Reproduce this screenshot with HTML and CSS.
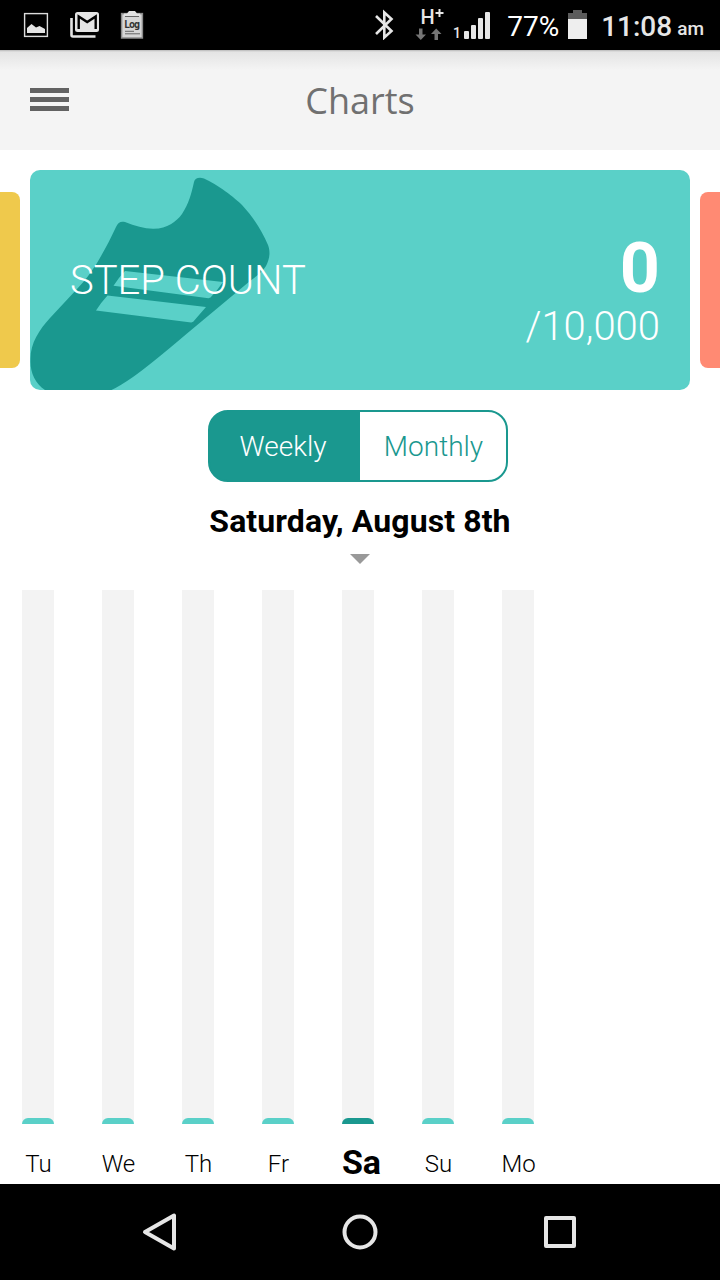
FILE: index.html
```
<!DOCTYPE html>
<html lang="en">
<head>
  <meta charset="utf-8">
  <title>Charts</title>
  <link rel="stylesheet" href="styles.css">
</head>
<body>
  <div class="status-bar">
    <svg class="notifications" width="124" height="30" viewBox="0 0 124 30">
      <!-- picture -->
      <rect x="4.6" y="3.6" width="22.8" height="22.8" fill="none" stroke="#dcdcdc" stroke-width="1.4"/>
      <path d="M7 23v-5l4.500-4 4.500 3.500 3.500-1.500 5.500 3v4H7z" fill="#e4e4e4"/>
      <!-- mail -->
      <path d="M51.5 8v17q0 1.500 1.500 1.500h22.500" fill="none" stroke="#e4e4e4" stroke-width="2.6"/>
      <rect x="55" y="2" width="24" height="20" rx="2.5" fill="#e4e4e4"/>
      <path d="M58.7 19V6.5l8.5 5.500 8.500-5.500V19" fill="none" stroke="#000" stroke-width="2.4"/>
      <!-- log -->
      <rect x="101.6" y="3.6" width="20.8" height="24.4" fill="#d6d6d6" stroke="#8c8c8c" stroke-width="1.5"/>
      <path d="M104 6V3.500h3l2-2.500h6l2 2.500h3V6z" fill="#e2e2e2"/>
      <path d="M105 6.500h14M105 21.300h9M105 23.800h15" stroke="#666" stroke-width="1"/>
      <text x="104" y="17.500" class="log-text" textLength="16">Log</text>
    </svg>
    <div class="system">
      <svg width="120" height="40" viewBox="0 0 120 40">
        <!-- bluetooth -->
        <path d="M6 16l15.500 15L14.300 37.500V12.500L21.500 19 6 34" class="bluetooth"/>
        <text x="50.500" y="24" class="network">H</text>
        <path d="M69.500 9v8M65.500 13h8" stroke="#e6e6e6" stroke-width="2"/>
        <path d="M49 28.500v6h-3.500l5.300 5.500L56 34.500h-3.500v-6zM64.500 40v-6H61l5.200-5.500L71.500 34H68v6z" fill="#757575"/>
        <text x="83" y="38" class="sim">1</text>
        <g fill="#e6e6e6">
          <rect x="94" y="31" width="5" height="8" rx="1"/>
          <rect x="101" y="25" width="5" height="14" rx="1"/>
          <rect x="108" y="18" width="5" height="21" rx="1"/>
          <rect x="115" y="12" width="5" height="27" rx="1"/>
        </g>
      </svg>
      <span class="percent">77%</span>
      <svg class="battery" width="19" height="29" viewBox="0 0 19 29">
        <path d="M0 3h5V0h9v3h5v6H0z" fill="#5c5c5c"/>
        <path d="M0 9h19v20H0z" fill="#eee"/>
      </svg>
      <span class="time">11:08</span>
      <span class="ampm">am</span>
    </div>
  </div>

  <header>
    <div class="menu">
      <span></span>
      <span></span>
      <span></span>
    </div>
    <h1>Charts</h1>
  </header>

  <div class="cards">
    <div class="side-card left"></div>
    <div class="card">
      <svg class="shoe" width="245" height="220" viewBox="0 0 245 220">
        <path fill="#1a988f" d="M164 12C165 8 169 7 174 8.500C187 14 205 28 212 35C224 48 232 61 238 75C241 83 239 90 236 96C232 102 227 106 220 111L157 163.500Q120 195 103 207Q90 216 81.500 220H15C5 213 0 202 .5 190C0 174 9 160 20 148L47 119C55 111 61 102 67 93C74 81 80 70 86 57C88 52 91 51 95 52C105 56 114 58.500 123 58.700C137 59 146 52 152 44C159 33 161 25 164 12z"/>
        <path fill="#5ad0c8" d="M95 101l98 11q-6 9-12.500 15.500l-2 .8-95-12.500q5-8 11.500-14.800zM77.500 125.500l98.500 11.500q-7 8-12.800 14.800l-2 .8L66 140.500q5-8 11.500-15z"/>
      </svg>
      <div class="card-title">STEP COUNT</div>
      <div class="count">
        <div class="steps">0</div>
        <div class="goal">/10,000</div>
      </div>
    </div>
    <div class="side-card right"></div>
  </div>

  <div class="toggle">
    <div class="option active">Weekly</div>
    <div class="option">Monthly</div>
  </div>

  <h2>Saturday, August 8th</h2>
  <svg class="arrow" width="20" height="10" viewBox="0 0 20 10">
    <path d="M0 0h20L10 10z" fill="#999"/>
  </svg>

  <div class="chart">
    <div class="day"><div class="bar"><div class="value"></div></div><p>Tu</p></div>
    <div class="day"><div class="bar"><div class="value"></div></div><p>We</p></div>
    <div class="day"><div class="bar"><div class="value"></div></div><p>Th</p></div>
    <div class="day"><div class="bar"><div class="value"></div></div><p>Fr</p></div>
    <div class="day selected"><div class="bar"><div class="value"></div></div><p>Sa</p></div>
    <div class="day"><div class="bar"><div class="value"></div></div><p>Su</p></div>
    <div class="day"><div class="bar"><div class="value"></div></div><p>Mo</p></div>
  </div>

  <nav>
    <svg width="40" height="40" viewBox="0 0 40 40"><path d="M5 20L34 3.500v33z"/></svg>
    <svg width="40" height="40" viewBox="0 0 40 40"><circle cx="20" cy="20" r="15.500"/></svg>
    <svg width="40" height="40" viewBox="0 0 40 40"><rect x="6" y="6" width="28" height="28"/></svg>
  </nav>
</body>
</html>
```
FILE: styles.css
```
* {
  box-sizing: border-box;
}

body {
  width: 720px;
  height: 1280px;
  margin: 0;
  font-family: Roboto, sans-serif;
  background-color: #ffffff;
  display: flex;
  flex-direction: column;
  overflow: hidden;
}

.status-bar {
  height: 50px;
  flex: none;
  background-color: #000000;
  color: #e6e6e6;
  display: flex;
  justify-content: space-between;
  padding: 0 16px 0 20px;
}

.notifications {
  margin-top: 10px;
}

.log-text {
  font: bold 10px "DejaVu Sans Mono", monospace;
  fill: #333333;
}

.system {
  display: flex;
  align-items: flex-start;
}

.bluetooth {
  fill: none;
  stroke: #e6e6e6;
  stroke-width: 2.6;
}

.network {
  font-size: 20px;
  font-weight: 500;
  fill: #e6e6e6;
}

.sim {
  font-size: 14px;
  font-weight: 500;
  fill: #e6e6e6;
}

.percent {
  margin: 10px 0 0 17px;
  font-size: 28px;
  line-height: 34px;
  color: #ffffff;
}

.battery {
  margin: 10px 0 0 9px;
}

.time {
  margin: 10px 0 0 14px;
  font-size: 28px;
  font-weight: 500;
  line-height: 34px;
}

.ampm {
  margin: 12px 0 0 5px;
  font-size: 19px;
  font-weight: 500;
  line-height: 34px;
}

header {
  height: 100px;
  flex: none;
  display: flex;
  align-items: center;
  padding: 0 30px;
  background: linear-gradient(#b8b8b8, #e4e4e4 2px, #f4f4f4 20px);
}

.menu {
  width: 39px;
  display: flex;
  flex-direction: column;
  gap: 4px;
  margin-bottom: 2px;
}

.menu span {
  height: 5px;
  background-color: #626262;
}

h1 {
  flex: 1;
  margin: 0 39px 0 0;
  font-family: "Open Sans", sans-serif;
  font-size: 36px;
  font-weight: 400;
  text-align: center;
  color: #707070;
}

.cards {
  display: flex;
  align-items: center;
  justify-content: space-between;
  margin-top: 20px;
  flex: none;
}

.side-card {
  width: 20px;
  height: 176px;
}

.left {
  background-color: #efc94c;
  border-radius: 0 8px 8px 0;
}

.right {
  background-color: #ff8a73;
  border-radius: 8px 0 0 8px;
}

.card {
  position: relative;
  width: 660px;
  height: 220px;
  display: flex;
  align-items: center;
  justify-content: space-between;
  padding: 0 30px 0 40px;
  border-radius: 10px;
  background-color: #5ad0c8;
  color: #ffffff;
  overflow: hidden;
}

/* shoe sits behind the card text */
.shoe {
  position: absolute;
  left: 0;
  top: 0;
}

.card-title {
  position: relative;
  font-size: 40px;
  font-weight: 300;
}

.count {
  text-align: right;
  padding-top: 24px;
}

.steps {
  font-size: 70px;
  font-weight: 700;
  line-height: 70px;
}

.goal {
  font-size: 40px;
  font-weight: 300;
  line-height: 48px;
}

.toggle {
  width: 300px;
  height: 72px;
  flex: none;
  display: flex;
  margin: 20px 0 0 208px;
  border: 2px solid #1a988f;
  border-radius: 20px;
  background: linear-gradient(to right, #1a988f 150px, #ffffff 150px);
}

.option {
  width: 146px;
  padding-left: 1px;
  font-size: 28px;
  font-weight: 300;
  line-height: 70px;
  text-align: center;
  color: #1a988f;
}

.active {
  width: 150px;
  padding: 0 4px 0 0;
  color: #ffffff;
}

h2 {
  margin: 20px 0 0;
  font-size: 32px;
  font-weight: 700;
  line-height: 38px;
  letter-spacing: 0.1px;
  text-align: center;
  color: #000000;
}

.arrow {
  flex: none;
  margin: 14px auto 0;
}

.chart {
  display: flex;
  flex: none;
  height: 594px;
  margin-top: 26px;
  padding-left: 22px;
  gap: 48px;
}

.day {
  width: 32px;
  display: flex;
  flex-direction: column;
  align-items: center;
}

.bar {
  width: 32px;
  height: 534px;
  display: flex;
  align-items: flex-end;
  background-color: #f3f3f3;
}

.value {
  width: 32px;
  height: 6px;
  border-radius: 6px 6px 0 0;
  background-color: #5ad0c8;
}

.day p {
  margin: 20px 0 0;
  padding-left: 1px;
  font-size: 24px;
  font-weight: 300;
  line-height: 40px;
  color: #000000;
}

.selected .value {
  background-color: #1a988f;
}

.selected p {
  margin-top: 18px;
  padding-left: 7px;
  font-size: 34px;
  font-weight: 700;
}

nav {
  height: 96px;
  flex: none;
  display: flex;
  justify-content: center;
  align-items: center;
  gap: 160px;
  background-color: #000000;
}

nav svg {
  fill: none;
  stroke: #e6e6e6;
  stroke-width: 4;
  stroke-linejoin: round;
}
```
